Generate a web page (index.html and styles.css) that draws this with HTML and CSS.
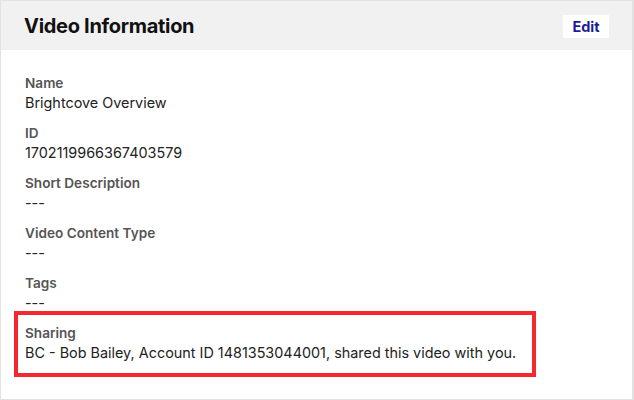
FILE: index.html
```html
<!DOCTYPE html>
<html>
<head>
<meta charset="utf-8">
<link rel="stylesheet" href="styles.css">
</head>
<body>
<div class="card">
  <div class="card-header">
    <h2 class="title">Video Information</h2>
    <button class="edit-btn">Edit</button>
  </div>
  <div class="card-body">
    <div class="field">
      <div class="label">Name</div>
      <div class="value">Brightcove Overview</div>
    </div>
    <div class="field">
      <div class="label">ID</div>
      <div class="value">1702119966367403579</div>
    </div>
    <div class="field">
      <div class="label">Short Description</div>
      <div class="value">---</div>
    </div>
    <div class="field">
      <div class="label">Video Content Type</div>
      <div class="value">---</div>
    </div>
    <div class="field">
      <div class="label">Tags</div>
      <div class="value">---</div>
    </div>
    <div class="field highlight">
      <div class="label">Sharing</div>
      <div class="value">BC - Bob Bailey, Account ID 1481353044001, shared this video with you.</div>
    </div>
  </div>
</div>
</body>
</html>
```
FILE: styles.css
```css
html, body {
  margin: 0;
  padding: 0;
  background: #ffffff;
}
body {
  font-family: Inter, "Liberation Sans", sans-serif;
  color: #222222;
}
.card {
  box-sizing: border-box;
  width: 634px;
  height: 400px;
  border: 1px solid #e2e2e2;
  border-right-width: 2px;
  display: flex;
  flex-direction: column;
}
.card-header {
  height: 49px;
  background: #f1f1f1;
  display: flex;
  align-items: center;
  justify-content: space-between;
  padding: 0 23px 0 23px;
}
.title {
  margin: 0;
  font-size: 20px;
  font-weight: 700;
  color: #111111;
  letter-spacing: -0.3px;
}
.edit-btn {
  border: none;
  background: #ffffff;
  color: #1c1c96;
  font-family: inherit;
  font-weight: 700;
  font-size: 14.5px;
  width: 46px;
  height: 23px;
  padding: 0;
  margin-top: 1px;
}
.card-body {
  padding: 24px 24px 0 24px;
  display: flex;
  flex-direction: column;
  gap: 12px;
}
.label {
  font-size: 13.6px;
  line-height: 19px;
  font-weight: 600;
  color: #555555;
}
.value {
  font-size: 14.4px;
  line-height: 19px;
  color: #222222;
}
.highlight {
  width: 522px;
  box-sizing: border-box;
  margin-left: -11px;
  margin-top: -13px;
  border: 4px solid #f5282d;
  padding: 9px 7px 11px 7px;
}
```
